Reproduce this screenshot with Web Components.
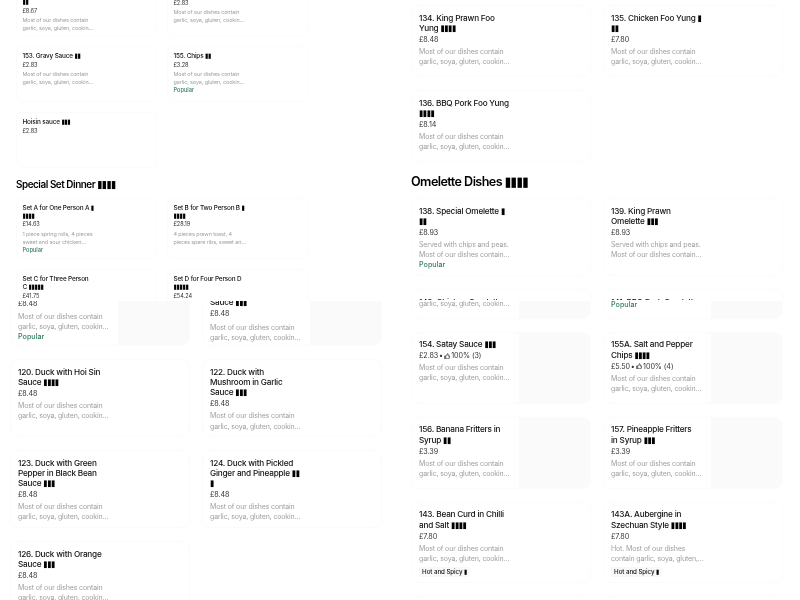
<!DOCTYPE html>
<html>
<head>
<meta charset="utf-8">
<title>Menu</title>
<style>
    html, body { margin: 0; padding: 0; background: #fff; }
    body { width: 800px; height: 600px; overflow: hidden; font-family: Inter, "Liberation Sans", sans-serif; }
    .sheet { display: grid; grid-template-columns: 400px 400px; grid-template-rows: 300px 300px; filter: blur(.3px); }
</style>
</head>
<body>
<div class="sheet">

    <menu-panel left="16" top="-8" scale="0.783" gap="10" width="141">
        <menu-grid>
            <menu-card price="£8.67" short style="min-height:44px"><red-act n="2"></red-act><span slot="desc">Most of our dishes contain garlic, soya, gluten, cookin…</span></menu-card>
            <menu-card price="£2.83" short><span slot="desc">Most of our dishes contain garlic, soya, gluten, cookin…</span></menu-card>
            <menu-card price="£2.83">153. Gravy Sauce <red-act n="2"></red-act><span slot="desc">Most of our dishes contain garlic, soya, gluten, cookin…</span></menu-card>
            <menu-card price="£3.28" popular>155. Chips <red-act n="2"></red-act><span slot="desc">Most of our dishes contain garlic, soya, gluten, cookin…</span></menu-card>
            <menu-card price="£2.83">Hoisin sauce <red-act n="3"></red-act></menu-card>
        </menu-grid>
        <menu-heading style="margin:10.9px 0 6.4px">Special Set Dinner <red-act n="4"></red-act></menu-heading>
        <menu-grid>
            <menu-card price="£14.63" popular style="--title-width:11.5em">Set A for One Person A <red-act n="1"></red-act> <red-act n="4"></red-act><span slot="desc">1 piece spring rolls, 4 pieces sweet and sour chicken…</span></menu-card>
            <menu-card price="£28.19">Set B for Two Person B <red-act n="1"></red-act> <red-act n="4"></red-act><span slot="desc">4 pieces prawn toast, 4 pieces spare ribs, sweet an…</span></menu-card>
            <menu-card price="£41.75">Set C for Three Person C <red-act n="5"></red-act></menu-card>
            <menu-card price="£54.24">Set D for Four Person D <red-act n="5"></red-act></menu-card>
        </menu-grid>
    </menu-panel>

    <menu-panel left="11" top="5" scale="1" gap="12" width="180">
        <menu-grid style="row-gap:13px">
            <menu-card price="£8.48" style="min-height:72px">134. King Prawn Foo Yung <red-act n="4"></red-act><span slot="desc">Most of our dishes contain garlic, soya, gluten, cookin…</span></menu-card>
            <menu-card price="£7.80">135. Chicken Foo Yung <red-act n="1"></red-act> <red-act n="2"></red-act><span slot="desc">Most of our dishes contain garlic, soya, gluten, cookin…</span></menu-card>
            <menu-card price="£8.14" style="min-height:72px">136. BBQ Pork Foo Yung <red-act n="4"></red-act><span slot="desc">Most of our dishes contain garlic, soya, gluten, cookin…</span></menu-card>
        </menu-grid>
        <menu-heading style="margin:11.8px 0 7.8px">Omelette Dishes <red-act n="4"></red-act></menu-heading>
        <menu-grid>
            <menu-card price="£8.93" popular>138. Special Omelette <red-act n="1"></red-act> <red-act n="2"></red-act><span slot="desc">Served with chips and peas. Most of our dishes contain…</span></menu-card>
            <menu-card price="£8.93">139. King Prawn Omelette <red-act n="3"></red-act><span slot="desc">Served with chips and peas. Most of our dishes contain…</span></menu-card>
            <menu-card>140. Chicken Omelette</menu-card>
            <menu-card>141. BBQ Pork Omelette</menu-card>
        </menu-grid>
    </menu-panel>

    <menu-panel left="10" top="-11.5" scale="1" gap="12" width="180" style="margin-top:1px;height:299px">
        <menu-grid>
            <menu-card price="£8.48" popular picture short><span slot="desc">Most of our dishes contain garlic, soya, gluten, cookin…</span></menu-card>
            <menu-card price="£8.48" picture short>Sauce <red-act n="3"></red-act><span slot="desc">Most of our dishes contain garlic, soya, gluten, cookin…</span></menu-card>
            <menu-card price="£8.48">120. Duck with Hoi Sin Sauce <red-act n="4"></red-act><span slot="desc">Most of our dishes contain garlic, soya, gluten, cookin…</span></menu-card>
            <menu-card price="£8.48">122. Duck with Mushroom in Garlic Sauce <red-act n="3"></red-act><span slot="desc">Most of our dishes contain garlic, soya, gluten, cookin…</span></menu-card>
            <menu-card price="£8.48">123. Duck with Green Pepper in Black Bean Sauce <red-act n="3"></red-act><span slot="desc">Most of our dishes contain garlic, soya, gluten, cookin…</span></menu-card>
            <menu-card price="£8.48">124. Duck with Pickled Ginger and Pineapple <red-act n="2"></red-act> <red-act n="1"></red-act><span slot="desc">Most of our dishes contain garlic, soya, gluten, cookin…</span></menu-card>
            <menu-card price="£8.48">126. Duck with Orange Sauce <red-act n="3"></red-act><span slot="desc">Most of our dishes contain garlic, soya, gluten, cookin…</span></menu-card>
        </menu-grid>
    </menu-panel>

    <menu-panel left="11" top="-12.5" scale="1" gap="12" width="180" style="margin-top:1px;height:299px">
        <menu-grid>
            <menu-card picture short style="min-height:30px"><span slot="desc">garlic, soya, gluten, cookin…</span></menu-card>
            <menu-card picture short popular></menu-card>
            <menu-card price="£2.83" rating="100% (3)" picture>154. Satay Sauce <red-act n="3"></red-act><span slot="desc">Most of our dishes contain garlic, soya, gluten, cookin…</span></menu-card>
            <menu-card price="£5.50" rating="100% (4)" picture>155A. Salt and Pepper Chips <red-act n="4"></red-act><span slot="desc">Most of our dishes contain garlic, soya, gluten, cookin…</span></menu-card>
            <menu-card price="£3.39" picture>156. Banana Fritters in Syrup <red-act n="2"></red-act><span slot="desc">Most of our dishes contain garlic, soya, gluten, cookin…</span></menu-card>
            <menu-card price="£3.39" picture>157. Pineapple Fritters in&nbsp;Syrup <red-act n="3"></red-act><span slot="desc">Most of our dishes contain garlic, soya, gluten, cookin…</span></menu-card>
            <menu-card price="£7.80" spicy>143. Bean Curd in Chilli and Salt <red-act n="4"></red-act><span slot="desc">Most of our dishes contain garlic, soya, gluten, cookin…</span></menu-card>
            <menu-card price="£7.80" spicy>143A. Aubergine in Szechuan Style <red-act n="4"></red-act><span slot="desc">Hot. Most of our dishes contain garlic, soya, gluten,…</span></menu-card>
            <menu-card></menu-card>
            <menu-card></menu-card>
        </menu-grid>
    </menu-panel>

</div>

<script>
class RedAct extends HTMLElement {
    constructor() {
        super();
        this.attachShadow({ mode: 'open' });
    }

    connectedCallback() {
        const n = parseInt(this.getAttribute('n') || '1', 10);
        this.shadowRoot.innerHTML = `
            <style>
                :host {
                    display: inline-block;
                    font-family: "DejaVu Sans", sans-serif;
                    font-size: .95em;
                    line-height: 1;
                    letter-spacing: -.06em;
                    color: #000;
                    transform: scaleY(1.12);
                    transform-origin: 50% 80%;
                }
            </style>${'\u25AE'.repeat(n)}`;
    }
}

class MenuPanel extends HTMLElement {
    constructor() {
        super();
        this.attachShadow({ mode: 'open' });
    }

    connectedCallback() {
        const scale = parseFloat(this.getAttribute('scale') || '1');
        this.shadowRoot.innerHTML = `
            <style>
                :host {
                    display: block;
                    overflow: hidden;
                    height: 300px;
                    font-size: ${10 * scale}px;
                    --card-width: ${this.getAttribute('width')}px;
                    --grid-gap: ${this.getAttribute('gap')}px;
                }
                .inner {
                    margin-top: ${this.getAttribute('top')}px;
                    padding-left: ${this.getAttribute('left')}px;
                }
            </style>
            <div class="inner"><slot></slot></div>
        `;
    }
}

class MenuGrid extends HTMLElement {
    constructor() {
        super();
        this.attachShadow({ mode: 'open' }).innerHTML = `
            <style>
                :host {
                    display: grid;
                    grid-template-columns: var(--card-width) var(--card-width);
                    column-gap: var(--grid-gap);
                    row-gap: 1.3em;
                }
            </style>
            <slot></slot>
        `;
    }
}

class MenuHeading extends HTMLElement {
    constructor() {
        super();
        this.attachShadow({ mode: 'open' }).innerHTML = `
            <style>
                :host {
                    display: block;
                    font-size: 1.26em;
                    line-height: 1.3em;
                    font-weight: 600;
                    color: #000;
                    letter-spacing: -.045em;
                }
            </style>
            <slot></slot>
        `;
    }
}

class MenuCard extends HTMLElement {
    constructor() {
        super();
        this.attachShadow({ mode: 'open' });
    }

    connectedCallback() {
        const price = this.getAttribute('price');
        const rating = this.getAttribute('rating');
        const thumb = `<svg viewBox="0 0 12 12" width=".9em" height=".9em"><path fill="none" stroke="#333" stroke-width="1.4" d="M1.2 5.5h2v5.3h-2zM3.2 10.8h6l1.6-5.3H7.4l.3-3c0-.8-.6-1.3-1.2-1.3L4.8 4.2 3.2 5.5"/></svg>`;
        let meta = '';
        if (price) {
            meta = `<div class="price">${price}<!--
                -->${rating ? `<span class="dot">•</span>${thumb}<span class="rate">${rating}</span>` : ''}</div>`;
        }
        const hasTitle = this.textContent.trim() || this.querySelector('red-act');
        const title = hasTitle ? '<div class="title"><slot></slot></div>' : '';

        this.shadowRoot.innerHTML = `
            <style>
                :host {
                    display: flex;
                    box-sizing: border-box;
                    min-height: 7.1em;
                    border: 1px solid #fbfbfb;
                    border-radius: .8em;
                    background: #fff;
                    overflow: hidden;
                    color: #111;
                }
                :host([picture]) { min-height: 7.2em; }
                :host([short]) { min-height: 0; }
                .text { flex: 1; min-width: 0; box-sizing: border-box; padding: .68em .7em .45em; }
                :host([short]) .text { padding-bottom: .25em; }
                .pic { flex: none; width: 40%; background: #fafafa; }
                .title { font-size: .82em; line-height: 1.25em; font-weight: 500; letter-spacing: -.025em; width: var(--title-width, 11.1em); }
                .price { font-size: .72em; line-height: 1.39em; color: #333; margin-top: .25em; letter-spacing: -.01em; white-space: nowrap; }
                .price svg { vertical-align: -.12em; margin: 0 .1em 0 .15em; }
                .dot { margin-left: .1em; }
                .desc { font-size: .7em; line-height: 1.43em; letter-spacing: -.02em; color: #a0a0a0; margin-top: .3em; width: 13.4em; }
                :host([short][picture]) .desc { margin-top: .45em; }
                .popular { font-size: .72em; line-height: 1.39em; color: #2f7d5c; font-weight: 500; }
                :host([short]) .popular { margin-top: .55em; }
                :host([short][price]) .popular { margin-top: 0; }
                .tag { display: inline-block; margin-top: .25em; padding: 0 .5em; font-size: .62em; line-height: 1.7em; font-weight: 500; letter-spacing: -.01em; background: #f8f8f8; border-radius: .3em; color: #111; }
            </style>
            <div class="text">
                ${title}
                ${meta}
                ${this.querySelector('[slot=desc]') ? '<div class="desc"><slot name="desc"></slot></div>' : ''}
                ${this.hasAttribute('popular') ? '<div class="popular">Popular</div>' : ''}
                ${this.hasAttribute('spicy') ? '<div class="tag">Hot and Spicy <red-act n="1"></red-act></div>' : ''}
            </div>
            ${this.hasAttribute('picture') ? '<div class="pic"></div>' : ''}
        `;
    }
}

customElements.define('red-act', RedAct);
customElements.define('menu-panel', MenuPanel);
customElements.define('menu-grid', MenuGrid);
customElements.define('menu-heading', MenuHeading);
customElements.define('menu-card', MenuCard);
</script>
</body>
</html>
